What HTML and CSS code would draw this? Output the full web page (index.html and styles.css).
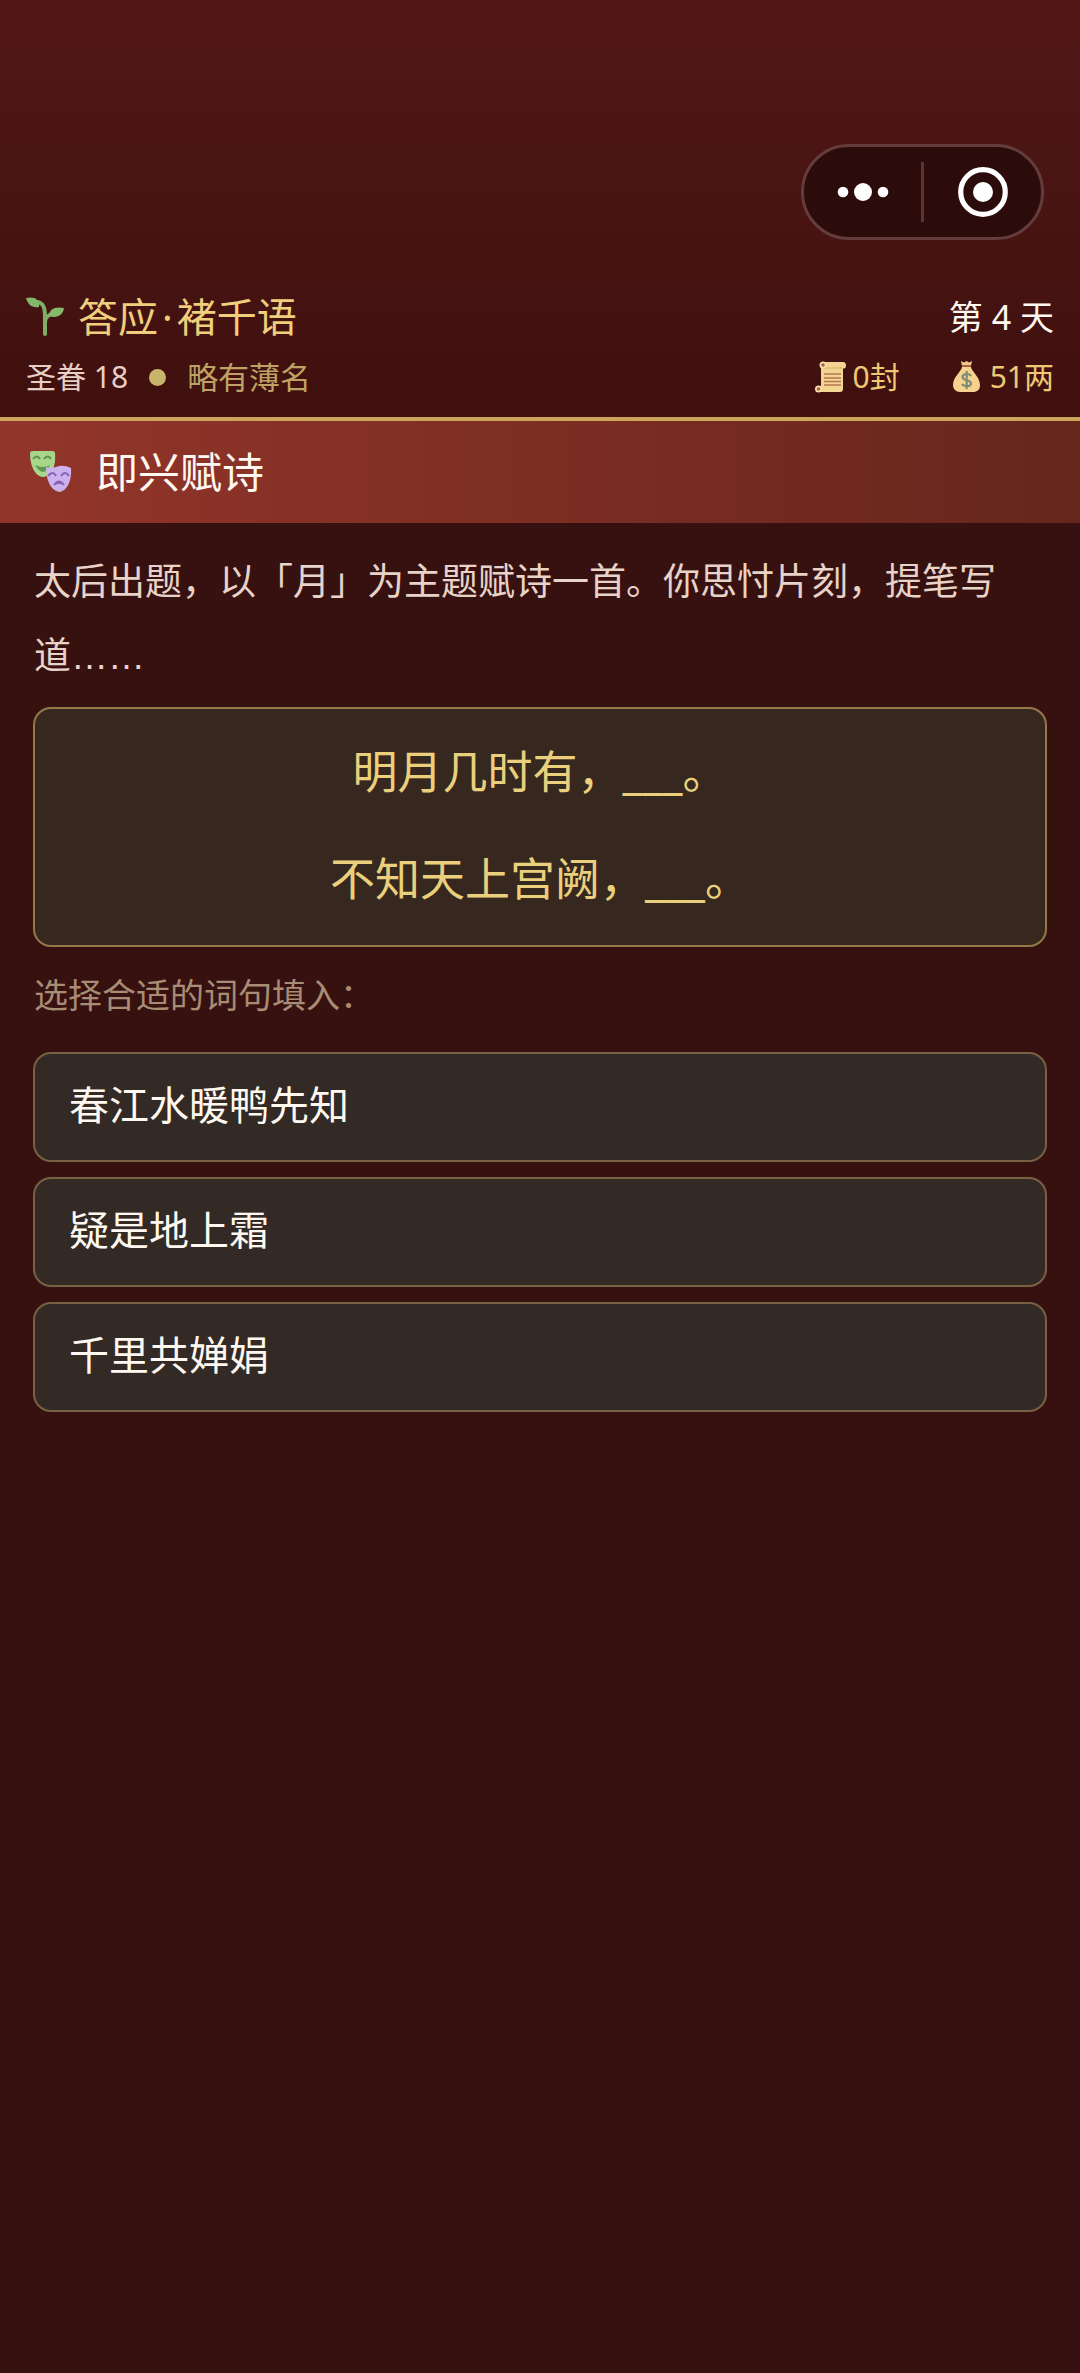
FILE: index.html
```html
<!DOCTYPE html>
<html lang="zh-CN">
<head>
<meta charset="utf-8">
<meta name="viewport" content="width=device-width, initial-scale=1">
<title>即兴赋诗</title>
<link rel="stylesheet" href="styles.css">
</head>
<body>
<header class="header">
  <div class="capsule">
    <button class="capsule-btn" type="button" aria-label="更多">
      <svg width="52" height="20" viewBox="0 0 52 20"><g fill="#fff"><circle cx="6" cy="10" r="5.3"/><circle cx="26" cy="10" r="9"/><circle cx="46" cy="10" r="5.3"/></g></svg>
    </button>
    <span class="capsule-line"></span>
    <button class="capsule-btn" type="button" aria-label="关闭">
      <svg width="50" height="50" viewBox="0 0 50 50"><circle cx="25" cy="25" r="22.3" fill="none" stroke="#fff" stroke-width="5.2"/><circle cx="25" cy="25" r="10" fill="#fff"/></svg>
    </button>
  </div>
  <div class="row row-main">
    <div class="player">
      <svg class="sprout" width="40" height="40" viewBox="0 0 40 40">
        <path d="M10 5C18 5 19 12 19 20V37M19 25C19 20 24 17 29 16" fill="none" stroke="#7fae68" stroke-width="4" stroke-linecap="round"/>
        <path d="M0 1C8-1 14 2 13 10C6 11 2 8 0 1Z" fill="#86b86c"/>
        <path d="M38 11C37 18 31 22 23 19C23 12 29 9 38 11Z" fill="#86b86c"/>
      </svg>
      <h1 class="name">答应<span class="sep">·</span>褚千语</h1>
    </div>
    <span class="day">第 4 天</span>
  </div>
  <div class="row row-sub">
    <div class="fame">
      <span class="favor">圣眷 18</span>
      <span class="dot"></span>
      <span class="rank">略有薄名</span>
    </div>
    <div class="purse">
      <span class="stat">
        <svg width="32" height="32" viewBox="0 0 32 32">
          <path d="M7 1H28Q31 1 31 4.500T28 7.500V28Q28 31 25 31H3V25H6V4Z" fill="#f3d493"/>
          <path d="M9 7H27" stroke="#d3a75f" stroke-width="1"/>
          <circle cx="8" cy="4" r="3.500" fill="#f9dfa6"/><circle cx="8" cy="4" r="1.800" fill="#a96354"/>
          <circle cx="3.500" cy="28" r="3.500" fill="#f9dfa6"/><circle cx="3.500" cy="28" r="1.800" fill="#a96354"/>
          <path d="M9 13H26M9 17H26M9 20.500H26M9 24H26" stroke="#b57752" stroke-width="1.500"/>
        </svg>
        0封
      </span>
      <span class="stat">
        <svg width="32" height="32" viewBox="0 0 32 32">
          <path d="M9 0L12 1.500L14.500 0L17 1.500L20 0L19 5H10Z" fill="#f3c987"/>
          <path d="M10 6H19C20 11 28 16 28 24C28 29 25 31 21 31H8C4 31 1 28 1 24C1 16 9 11 10 6Z" fill="#f5d38e"/>
          <path d="M10 5H19" stroke="#a86249" stroke-width="2"/>
          <path d="M19 15C17 12 10.500 12.500 10.500 16C10.500 20 19 18.500 19 22.500C19 26 12 26 10 23M14.700 10V28" fill="none" stroke="#7c8c76" stroke-width="2.200"/>
        </svg>
        51两
      </span>
    </div>
  </div>
</header>
<div class="banner">
  <svg class="masks" width="44" height="44" viewBox="0 0 44 44">
    <path d="M1 3Q1 1 4 1H23Q26 1 26 3C27 14 24 26 14 27C5 26 1 14 1 3Z" fill="#a9d58b"/>
    <path d="M4 9Q8 4 11 9M15 9Q19 4 22 9" fill="none" stroke="#5d914d" stroke-width="2"/>
    <path d="M6 15Q14 19 21 15Q18 22 14 22T6 15Z" fill="#5d9a4d"/>
    <path d="M17 17Q24 19 30 16Q36 15 42 18C43 29 39 41 30 42C21 40 17 29 17 17Z" fill="#cbb2ec"/>
    <path d="M19 26Q24 20 27 26M32 26Q36 20 40 26M25 35Q30 28 35 35" fill="none" stroke="#8a63b8" stroke-width="2"/>
    <path d="M25 35Q30 28 35 35Q30 33 25 35Z" fill="#8a63b8"/>
  </svg>
  <h2 class="banner-title">即兴赋诗</h2>
</div>
<main class="content">
  <p class="story">太后出题，以「月」为主题赋诗一首。你思忖片刻，提笔写道……</p>
  <div class="poem">
    <p class="verse">明月几时有，___。</p>
    <p class="verse">不知天上宫阙，___。</p>
  </div>
  <p class="hint">选择合适的词句填入：</p>
  <div class="options">
    <button class="option" type="button">春江水暖鸭先知</button>
    <button class="option" type="button">疑是地上霜</button>
    <button class="option" type="button">千里共婵娟</button>
  </div>
</main>
</body>
</html>
```
FILE: styles.css
```css
* { box-sizing: border-box; }
body {
  margin: 0;
  min-height: 100vh;
  background: #371110;
  color: #fff8f0;
  font-family: "Noto Sans", "Noto Sans CJK SC", sans-serif;
}
h1, h2, p { margin: 0; font-weight: inherit; }
button { font: inherit; color: inherit; cursor: pointer; }
svg { display: block; flex: none; overflow: visible; }

.header {
  padding: 144px 26px 0;
  border-bottom: 4px solid #cda45c;
  background: linear-gradient(#521816, #3f100e);
}
.capsule {
  display: flex;
  align-items: center;
  width: 243px;
  height: 96px;
  margin: 0 10px 47px auto;
  border: 3px solid #633c3b;
  border-radius: 48px;
  background: #2c0b0b;
}
.capsule-btn {
  display: flex;
  flex: 1;
  align-items: center;
  justify-content: center;
  height: 100%;
  padding: 0;
  border: 0;
  background: none;
}
.capsule-line { width: 3px; height: 60px; background: #5f3434; }

.row { display: flex; align-items: center; justify-content: space-between; }
.row-main { height: 60px; line-height: 60px; }
.row-sub { height: 70px; padding-bottom: 10px; font-size: 30px; line-height: 56px; }
.player { display: flex; align-items: center; gap: 12px; }
.name { font-size: 40px; color: #efcf7c; }
.sep { margin: 0 4px; }
.day { font-size: 34px; }
.fame { display: flex; align-items: center; gap: 21px; }
.favor { color: #e8cfc6; }
.dot { width: 17px; height: 17px; border-radius: 50%; background: #c9b46c; }
.rank { font-size: 31px; color: #bfa263; }
.purse { display: flex; gap: 52px; color: #efc873; }
.stat { display: flex; align-items: center; gap: 6px; }

.banner {
  display: flex;
  align-items: center;
  gap: 23px;
  height: 102px;
  padding: 0 29px;
  background: linear-gradient(90deg, #93352a, #66261c);
}
.banner-title { font-size: 42px; line-height: 60px; }

.content { padding: 23px 33px; }
/* Liberation Sans sets the ellipsis on the baseline, one em wide */
.story {
  padding-left: 1px;
  font-family: "Liberation Sans", "Noto Sans CJK SC", sans-serif;
  font-size: 37px;
  line-height: 74px;
  color: #e8d3c8;
}
.poem {
  margin-top: 13px;
  padding: 9px 34px 13px;
  border: 2px solid #94784a;
  border-radius: 18px;
  background: #37281f;
  text-align: center;
}
.verse { font-size: 45px; line-height: 107px; color: #ead07c; }
.hint { margin: 20px 0 29px; padding-left: 1px; font-size: 34px; line-height: 56px; color: #a88c74; }
.options { display: flex; flex-direction: column; gap: 15px; }
.option {
  height: 110px;
  padding: 0 34px 4px;
  border: 2px solid #796143;
  border-radius: 18px;
  background: #332a26;
  font-size: 40px;
  line-height: 60px;
  text-align: left;
}
```
